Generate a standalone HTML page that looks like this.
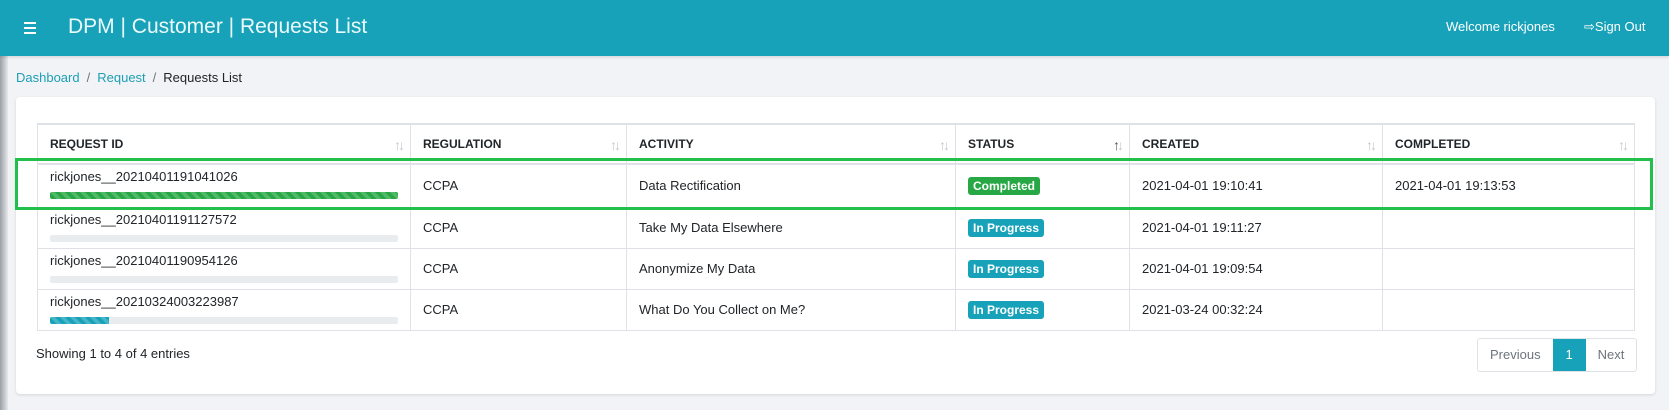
<!DOCTYPE html>
<html><head><meta charset="utf-8"><style>
*{box-sizing:border-box;margin:0;padding:0}
body{width:1669px;height:410px;background:#f2f3f6;font-family:"Liberation Sans",sans-serif;color:#212529;position:relative;overflow:hidden;font-size:13px}
.side{position:absolute;left:0;top:0;width:8px;height:410px;background:linear-gradient(90deg,#9aa0a6,#e6e8eb)}
.hdr{position:absolute;left:0;top:0;width:1669px;height:56px;background:#18a2b9;box-shadow:0 1px 3px rgba(0,0,0,.15)}
.ham{position:absolute;left:24px;top:22px;width:12px}
.ham i{display:block;height:2px;background:#fff;margin-bottom:3px}
.title{position:absolute;left:68px;top:15px;color:#eafafd;font-size:21px}
.wel{position:absolute;left:1446px;top:19px;color:#fff;font-size:13px}
.so{position:absolute;left:1584px;top:19px;color:#fff;font-size:13px}
.bc{position:absolute;left:16px;top:70px;font-size:13px;color:#212529}
.bc a{color:#1d9fb6;text-decoration:none}
.bc span{color:#6c757d;margin:0 7px}
.card{position:absolute;left:16px;top:97px;width:1639px;height:297px;background:#fff;border-radius:4px;box-shadow:0 1px 3px rgba(0,0,0,.12)}
table{position:absolute;left:37px;top:123px;border-collapse:collapse;table-layout:fixed}
td,th{border:1px solid #dee2e6;padding:0 12px;text-align:left;vertical-align:middle;position:relative}
th{font-size:12px;font-weight:bold;height:40px;border-top:2px solid #dee2e6;border-bottom:2px solid #dee2e6}
th .s{position:absolute;right:8px;top:12px;color:#c5c9cd;font-size:14px;letter-spacing:-3px;font-weight:normal}
td{height:41px}
.rid{vertical-align:top;padding-top:4px}
.bar{margin-top:8px;height:7px;background:#e9ecef;border-radius:2px;overflow:hidden}
.bar i{display:block;height:100%;background-image:linear-gradient(45deg,rgba(255,255,255,.2) 25%,transparent 25%,transparent 50%,rgba(255,255,255,.2) 50%,rgba(255,255,255,.2) 75%,transparent 75%);background-size:10px 10px}
.b{display:inline-block;color:#fff;font-weight:bold;font-size:12px;padding:2px 5px;border-radius:3px}
.green{position:absolute;left:15px;top:158px;width:1638px;height:52px;border:3px solid #22c04a}
.show{position:absolute;left:36px;top:346px;font-size:13px}
.pg{position:absolute;left:1477px;top:338px;height:34px;display:flex;border:1px solid #dee2e6;border-radius:3px;overflow:hidden;font-size:13px}
.pg div{padding:0 12px;line-height:32px;color:#6c757d}
.pg .a{background:#18a2b9;color:#fff;width:33px;text-align:center;padding:0}
</style></head><body>
<div class="side"></div>
<div class="hdr"><div class="ham"><i></i><i></i><i></i></div>
<div class="title">DPM | Customer | Requests List</div>
<div class="wel">Welcome rickjones</div>
<div class="so">⇨Sign Out</div></div>
<div class="bc"><a>Dashboard</a><span>/</span><a>Request</a><span>/</span>Requests List</div>
<div class="card"></div>
<table>
<colgroup><col style="width:373px"><col style="width:216px"><col style="width:329px"><col style="width:174px"><col style="width:253px"><col style="width:252px"></colgroup>
<tr><th>REQUEST ID<span class="s">↑↓</span></th><th>REGULATION<span class="s">↑↓</span></th><th>ACTIVITY<span class="s">↑↓</span></th><th>STATUS<span class="s" style="color:#555">↑<span style="color:#c5c9cd">↓</span></span></th><th>CREATED<span class="s">↑↓</span></th><th>COMPLETED<span class="s">↑↓</span></th></tr>
<tr><td class="rid" style="height:43px">rickjones__20210401191041026<div class="bar"><i style="width:100%;background-color:#28a745"></i></div></td><td>CCPA</td><td>Data Rectification</td><td><span class="b" style="background:#28a745">Completed</span></td><td>2021-04-01 19:10:41</td><td>2021-04-01 19:13:53</td></tr>
<tr><td class="rid">rickjones__20210401191127572<div class="bar"></div></td><td>CCPA</td><td>Take My Data Elsewhere</td><td><span class="b" style="background:#18a2b9">In Progress</span></td><td>2021-04-01 19:11:27</td><td></td></tr>
<tr><td class="rid">rickjones__20210401190954126<div class="bar"></div></td><td>CCPA</td><td>Anonymize My Data</td><td><span class="b" style="background:#18a2b9">In Progress</span></td><td>2021-04-01 19:09:54</td><td></td></tr>
<tr><td class="rid">rickjones__20210324003223987<div class="bar"><i style="width:17%;background-color:#18a2b9"></i></div></td><td>CCPA</td><td>What Do You Collect on Me?</td><td><span class="b" style="background:#18a2b9">In Progress</span></td><td>2021-03-24 00:32:24</td><td></td></tr>
</table>
<div class="green"></div>
<div class="show">Showing 1 to 4 of 4 entries</div>
<div class="pg"><div>Previous</div><div class="a">1</div><div>Next</div></div>
</body></html>
